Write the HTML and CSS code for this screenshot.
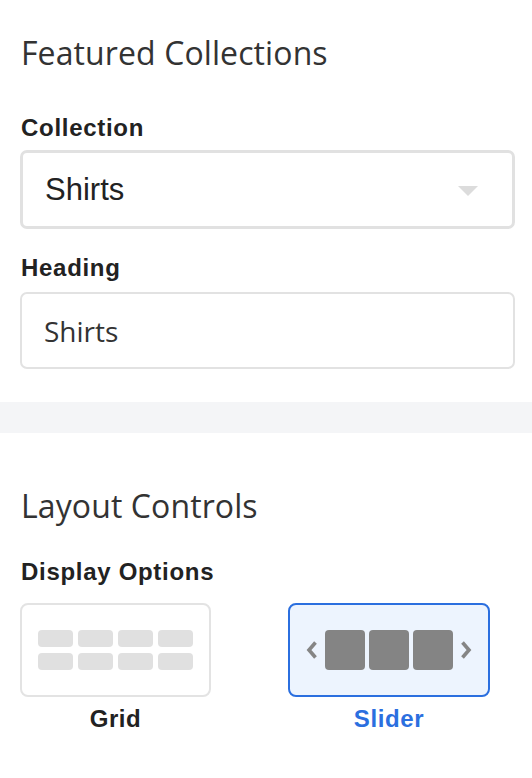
FILE: index.html
```html
<!DOCTYPE html>
<html>

<head>
    <title>Section Settings</title>
    <link rel="stylesheet" href="styles.css">
</head>

<body>
    <section class="panel panelTop">
        <h2 class="panelTitle">Featured Collections</h2>
        <div class="field">
            <label class="fieldLabel">Collection</label>
            <div class="selectBox">
                <span class="selectValue">Shirts</span>
                <span class="selectArrow"></span>
            </div>
        </div>
        <div class="field">
            <label class="fieldLabel">Heading</label>
            <div class="textInput">Shirts</div>
        </div>
    </section>

    <div class="divider"></div>

    <section class="panel panelBottom">
        <h2 class="panelTitle">Layout Controls</h2>
        <div class="field">
            <label class="fieldLabel">Display Options</label>
            <div class="displayOptions">
                <div class="displayOption">
                    <div class="optionCard">
                        <div class="gridPreview">
                            <span class="gridCell"></span>
                            <span class="gridCell"></span>
                            <span class="gridCell"></span>
                            <span class="gridCell"></span>
                            <span class="gridCell"></span>
                            <span class="gridCell"></span>
                            <span class="gridCell"></span>
                            <span class="gridCell"></span>
                        </div>
                    </div>
                    <p class="optionName">Grid</p>
                </div>
                <div class="displayOption selected">
                    <div class="optionCard">
                        <div class="sliderPreview">
                            <svg class="chevron" width="12" height="18" viewBox="0 0 12 18">
                                <path d="M9.5 1.5 L3 9 L9.5 16.5" fill="none" stroke="#858585" stroke-width="3.6" />
                            </svg>
                            <div class="slides">
                                <span class="slide"></span>
                                <span class="slide"></span>
                                <span class="slide"></span>
                            </div>
                            <svg class="chevron" width="12" height="18" viewBox="0 0 12 18">
                                <path d="M2.5 1.5 L9 9 L2.5 16.5" fill="none" stroke="#858585" stroke-width="3.6" />
                            </svg>
                        </div>
                    </div>
                    <p class="optionName">Slider</p>
                </div>
            </div>
        </div>
    </section>
</body>

</html>
```

FILE: styles.css
```css
body {
    margin: 0;
    background-color: white;
    font-family: 'Liberation Sans', Arial, sans-serif;
    color: #222;
}

.panel {
    padding: 0 17px 0 20px;
}

.panelTop {
    padding-top: 33px;
    padding-bottom: 33px;
}

.panelBottom {
    padding-top: 53px;
}

.panelTitle {
    margin: 0 0 41px 1px;
    font-family: 'Open Sans', sans-serif;
    font-size: 32px;
    font-weight: 400;
    line-height: 40px;
    letter-spacing: 0.1px;
    color: #333;
}

.panelBottom .panelTitle {
    margin-bottom: 32px;
}

.field + .field {
    margin-top: 25px;
}

.fieldLabel {
    display: block;
    margin: 0 0 8px 1px;
    font-size: 24px;
    font-weight: bold;
    line-height: 28px;
    letter-spacing: 0.7px;
    color: #222;
}

.selectBox {
    display: flex;
    align-items: center;
    justify-content: space-between;
    height: 79px;
    box-sizing: border-box;
    padding: 0 34px 0 22px;
    border: 3px solid #e1e1e1;
    border-radius: 7px;
}

.selectValue {
    font-size: 31px;
    color: #222;
}

.selectArrow {
    width: 0;
    height: 0;
    margin-top: 3px;
    border-left: 10px solid transparent;
    border-right: 10px solid transparent;
    border-top: 10px solid #dcdcdc;
}

.textInput {
    display: flex;
    align-items: center;
    height: 77px;
    box-sizing: border-box;
    margin-top: 10px;
    padding: 0 22px;
    border: 2px solid #e2e2e2;
    border-radius: 7px;
    font-family: 'Open Sans', sans-serif;
    font-size: 28px;
    color: #333;
}

.divider {
    height: 31px;
    background-color: #f4f5f7;
}

.displayOptions {
    display: flex;
    gap: 77px;
    margin-top: 17px;
}

.displayOption {
    display: flex;
    flex-direction: column;
    align-items: center;
}

.optionCard {
    padding: 25px 16px;
    border: 2px solid #e3e3e3;
    border-radius: 8px;
    background-color: white;
}

.gridPreview {
    display: grid;
    grid-template-columns: repeat(4, 35px);
    grid-auto-rows: 17px;
    gap: 6px 5px;
}

.gridCell {
    border-radius: 4px;
    background-color: #e0e0e0;
}

.sliderPreview {
    display: flex;
    align-items: center;
    gap: 7px;
}

.slides {
    display: flex;
    gap: 4px;
}

.slide {
    width: 40px;
    height: 40px;
    border-radius: 4px;
    background-color: #848484;
}

.chevron {
    display: block;
}

.optionName {
    margin: 8px 0 0;
    font-size: 24px;
    font-weight: bold;
    line-height: 28px;
    letter-spacing: 0.6px;
    color: #222;
}

.selected .optionCard {
    border-color: #2b6fdf;
    background-color: #edf4fe;
}

.selected .optionName {
    color: #2b6fdf;
}
```
